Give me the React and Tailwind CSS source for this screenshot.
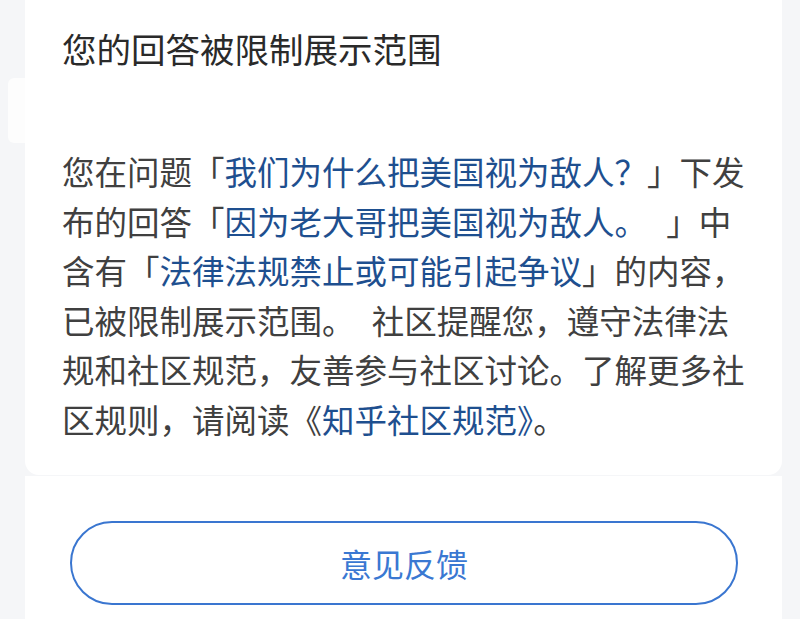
import React from 'react';

const blue = 'text-[#1e4f8f]';

export default function App() {
  return (
    <div
      className="relative w-[800px] h-[619px] overflow-hidden bg-[#f5f6f8] text-[#404040]"
      style={{ fontFamily: '"Noto Sans CJK SC", "Noto Sans", sans-serif' }}
    >
      {/* side tab peeking out behind the card */}
      <div className="absolute left-[8px] top-[78px] w-[20px] h-[65px] rounded-l-[6px] bg-[#fdfdfd]" />

      {/* Notice card */}
      <div className="relative ml-[25px] mr-[18px] bg-white rounded-b-[14px] pl-[37px] pr-[20px] pb-[32px]">
        <div className="h-[96px] flex items-center text-[34.5px] leading-[48px] text-[#2a2a2a]">
          您的回答被限制展示范围
        </div>
        <div className="mt-[50px] text-[32.5px] leading-[49.5px] whitespace-nowrap">
          <div>
            您在问题「<span className={blue}>我们为什么把美国视为敌人？</span>」下发
          </div>
          <div>
            布的回答「<span className={blue}>因为老大哥把美国视为敌人。 </span>
            <span className="ml-[12px]">」中</span>
          </div>
          <div>
            含有「<span className={blue}>法律法规禁止或可能引起争议</span>」的内容，
          </div>
          <div>
            已被限制展示范围。 <span className="ml-[10px]">社区提醒您，遵守法律法</span>
          </div>
          <div>规和社区规范，友善参与社区讨论。了解更多社</div>
          <div>
            区规则，请阅读《<span className={blue}>知乎社区规范》</span>。
          </div>
        </div>
      </div>

      {/* Feedback card */}
      <div className="ml-[25px] mr-[18px] mt-[1px] h-[200px] bg-white pt-[45px] pl-[45px] pr-[44px]">
        <button className="w-full h-[84px] rounded-full border-2 border-[#3a76d0] bg-white text-[32px] text-[#3a78d2]">
          意见反馈
        </button>
      </div>
    </div>
  );
}
